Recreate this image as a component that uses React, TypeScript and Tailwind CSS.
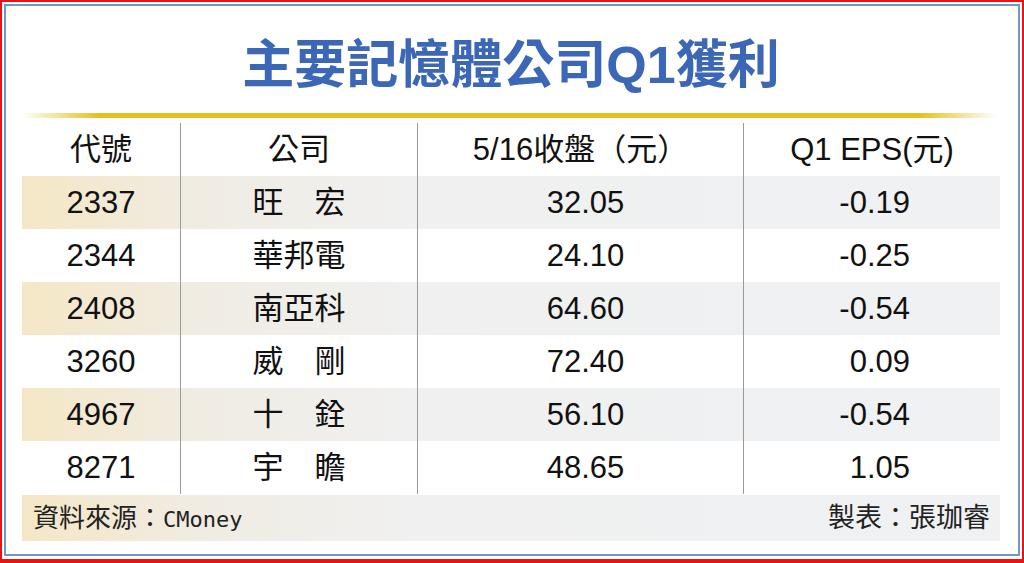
const rows = [
  { code: '2337', name: '旺　宏', close: '32.05', eps: '-0.19' },
  { code: '2344', name: '華邦電', close: '24.10', eps: '-0.25' },
  { code: '2408', name: '南亞科', close: '64.60', eps: '-0.54' },
  { code: '3260', name: '威　剛', close: '72.40', eps: '0.09' },
  { code: '4967', name: '十　銓', close: '56.10', eps: '-0.54' },
  { code: '8271', name: '宇　瞻', close: '48.65', eps: '1.05' },
];

const cols = 'grid grid-cols-[158px_237px_326px_257px]';
const band =
  'bg-[linear-gradient(to_right,#f5e7c6_0%,#f0ece3_18%,#f0f0f0_40%,#eff1f3_100%)]';

export default function App() {
  return (
    <div className="h-[563px] w-[1024px] border-2 border-b-4 border-[#ee1111] bg-white p-[2px] pb-[3px] font-['Liberation_Sans','Noto_Sans_CJK_TC',sans-serif] text-[#111]">
      <div className="flex h-full flex-col border-2 border-[#7396cc] bg-white pl-[16px] pr-[18px]">
        {/* title */}
        <h1 className="mt-[33px] text-center text-[52px] font-bold leading-none text-[#3b67b6]">
          主要記憶體公司Q1獲利
        </h1>
        <div className="mt-[22px] h-[5px] w-[975px] bg-[linear-gradient(to_right,rgba(229,191,31,0)_0%,#e5bf1f_8%,#e5bf1f_92%,rgba(229,191,31,0)_100%)]" />

        {/* header */}
        <div className={`${cols} mt-[5px] h-[53px] text-[31px] leading-none`}>
          <div className="flex items-center justify-center">代號</div>
          <div className="flex items-center justify-center border-l border-[#9a9a9a]">公司</div>
          <div className="flex items-center justify-center border-l border-[#9a9a9a]">5/16收盤（元）</div>
          <div className="flex items-center justify-center border-l border-[#9a9a9a]">Q1 EPS(元)</div>
        </div>

        {/* rows */}
        {rows.map((r, i) => (
          <div
            key={r.code}
            className={`${cols} h-[53px] text-[31px] leading-none ${i % 2 === 0 ? band : ''}`}
          >
            <div className="flex items-center justify-center">{r.code}</div>
            <div className="flex items-center justify-center border-l border-[#9a9a9a]">{r.name}</div>
            <div className="flex items-center justify-center border-l border-[#9a9a9a] pl-[10px]">
              {r.close}
            </div>
            <div className="flex items-center justify-end border-l border-[#9a9a9a] pr-[90px]">
              {r.eps}
            </div>
          </div>
        ))}

        {/* footer */}
        <div
          className={`mt-px flex h-[46px] w-[978px] items-center justify-between pl-[11px] pr-[10px] text-[26px] leading-none text-[#222] ${band}`}
        >
          <span>
            資料來源：<span className="font-['DejaVu_Sans_Mono',monospace] text-[22px]">CMoney</span>
          </span>
          <span className="text-[27px]">製表：張珈睿</span>
        </div>
      </div>
    </div>
  );
}
